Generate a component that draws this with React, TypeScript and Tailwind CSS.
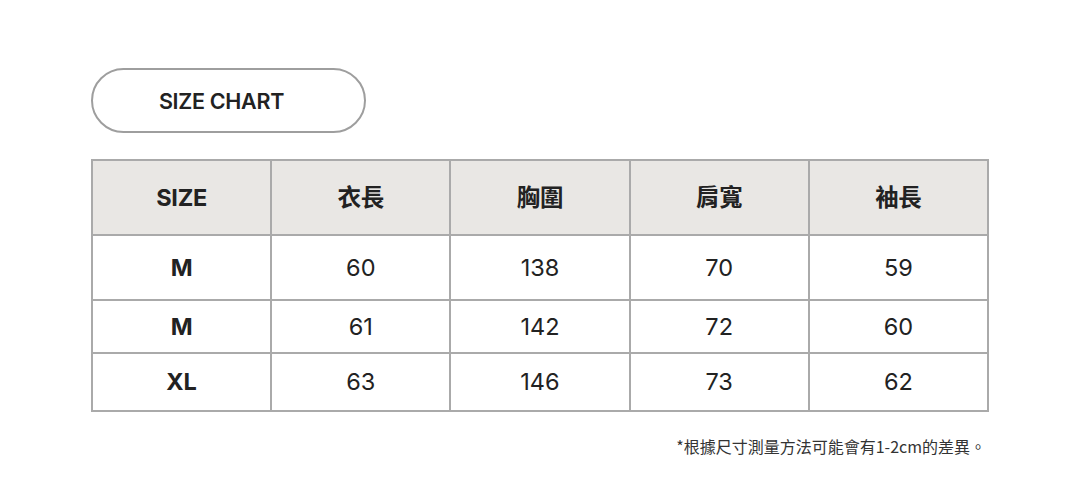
const headers = ["SIZE", "衣長", "胸圍", "肩寬", "袖長"];

const rows = [
  { size: "M", values: ["60", "138", "70", "59"], h: "h-[65px]" },
  { size: "M", values: ["61", "142", "72", "60"], h: "h-[53px]" },
  { size: "XL", values: ["63", "146", "73", "62"], h: "h-[58px]" },
];

export default function App() {
  return (
    <div className="w-[1080px] h-[491px] bg-white font-['Inter','Noto_Sans_CJK_TC',sans-serif] text-[#222]">
      <div className="pl-[91px] pt-[68px]">
        <div className="w-[275px] h-[65px] rounded-full border-2 border-[#9e9e9e] flex items-center justify-center pr-[14px] pt-[1px]">
          <span className="text-[21.5px] font-semibold tracking-[-0.3px]">SIZE CHART</span>
        </div>

        <table className="mt-[26px] w-[898px] table-fixed border-collapse">
          <thead>
            <tr className="h-[75px] bg-[#e9e7e4]">
              {headers.map((h, i) => (
                <th key={i} className="border-2 border-[#aaaaaa] text-[23.5px] font-bold text-center tracking-[-0.3px]">
                  {h}
                </th>
              ))}
            </tr>
          </thead>
          <tbody>
            {rows.map((r, i) => (
              <tr key={i} className={r.h}>
                <td className="border-2 border-[#aaaaaa] text-[23.5px] font-bold text-center">{r.size}</td>
                {r.values.map((v, j) => (
                  <td key={j} className="border-2 border-[#aaaaaa] text-[23.5px] text-center">
                    {v}
                  </td>
                ))}
              </tr>
            ))}
          </tbody>
        </table>

        <p className="w-[898px] text-right pr-[3px] mt-[22px] text-[16px] text-[#333] font-['Noto_Sans_CJK_TC',sans-serif]">
          *根據尺寸測量方法可能會有1-2cm的差異。
        </p>
      </div>
    </div>
  );
}
